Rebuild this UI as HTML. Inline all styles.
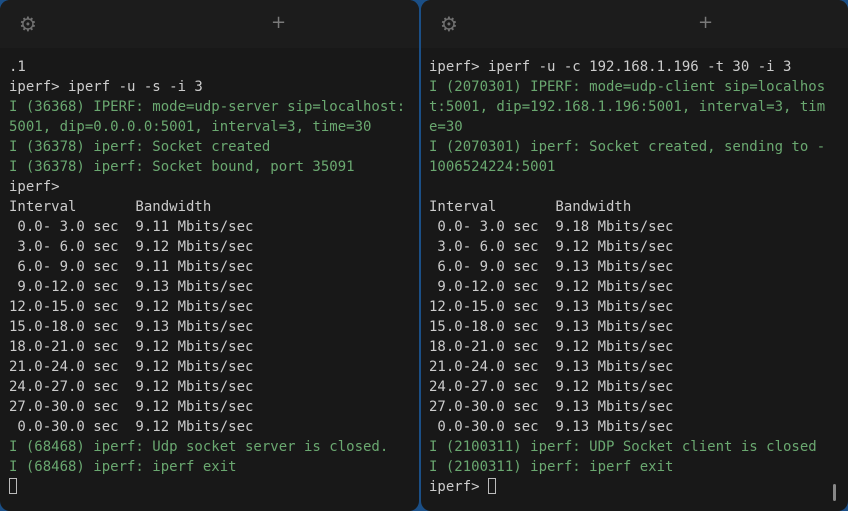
<!DOCTYPE html>
<html><head><meta charset="utf-8"><style>
html,body{margin:0;padding:0;width:848px;height:511px;overflow:hidden;background:#1b4f86;}
.p{position:absolute;top:0;height:511px;background:#181818;border-radius:10px;overflow:hidden;}
.h{position:absolute;left:0;right:0;top:0;height:48px;background:#1c1c1c;}
.g{position:absolute;top:12px;font:bold 20px "DejaVu Sans",sans-serif;color:#707070;}
.pl{position:absolute;top:12px;font:18px "DejaVu Sans",sans-serif;color:#7a7a7a;}
pre{position:absolute;left:9px;top:57px;margin:0;font:14px/20px "DejaVu Sans Mono","Liberation Mono",monospace;color:#cccccc;}
.c{color:#6aa870;}
.cur{display:inline-block;width:8px;height:16px;border:1px solid #bbb;vertical-align:-3px;box-sizing:border-box;}
</style></head><body>
<div class="p" style="left:0;width:419px;">
<div class="h"></div><div class="g" style="left:19px">⚙</div><div class="pl" style="left:271px">+</div>
<pre>.1
iperf&gt; iperf -u -s -i 3
<span class="c">I (36368) IPERF: mode=udp-server sip=localhost:
5001, dip=0.0.0.0:5001, interval=3, time=30
I (36378) iperf: Socket created
I (36378) iperf: Socket bound, port 35091</span>
iperf&gt;
Interval       Bandwidth
 0.0- 3.0 sec  9.11 Mbits/sec
 3.0- 6.0 sec  9.12 Mbits/sec
 6.0- 9.0 sec  9.11 Mbits/sec
 9.0-12.0 sec  9.13 Mbits/sec
12.0-15.0 sec  9.12 Mbits/sec
15.0-18.0 sec  9.13 Mbits/sec
18.0-21.0 sec  9.12 Mbits/sec
21.0-24.0 sec  9.12 Mbits/sec
24.0-27.0 sec  9.12 Mbits/sec
27.0-30.0 sec  9.12 Mbits/sec
 0.0-30.0 sec  9.12 Mbits/sec
<span class="c">I (68468) iperf: Udp socket server is closed.
I (68468) iperf: iperf exit</span>
<span class="cur"></span></pre>
</div>
<div class="p" style="left:421px;width:427px;">
<div class="h"></div><div class="g" style="left:19px">⚙</div><div class="pl" style="left:277px">+</div>
<pre style="left:8px">iperf&gt; iperf -u -c 192.168.1.196 -t 30 -i 3
<span class="c">I (2070301) IPERF: mode=udp-client sip=localhos
t:5001, dip=192.168.1.196:5001, interval=3, tim
e=30
I (2070301) iperf: Socket created, sending to -
1006524224:5001</span>

Interval       Bandwidth
 0.0- 3.0 sec  9.18 Mbits/sec
 3.0- 6.0 sec  9.12 Mbits/sec
 6.0- 9.0 sec  9.13 Mbits/sec
 9.0-12.0 sec  9.12 Mbits/sec
12.0-15.0 sec  9.13 Mbits/sec
15.0-18.0 sec  9.13 Mbits/sec
18.0-21.0 sec  9.12 Mbits/sec
21.0-24.0 sec  9.13 Mbits/sec
24.0-27.0 sec  9.12 Mbits/sec
27.0-30.0 sec  9.13 Mbits/sec
 0.0-30.0 sec  9.13 Mbits/sec
<span class="c">I (2100311) iperf: UDP Socket client is closed
I (2100311) iperf: iperf exit</span>
iperf&gt; <span class="cur"></span></pre>
<div style="position:absolute;left:412px;top:484px;width:3px;height:17px;background:#888;border-radius:2px"></div>
</div>
</body></html>
